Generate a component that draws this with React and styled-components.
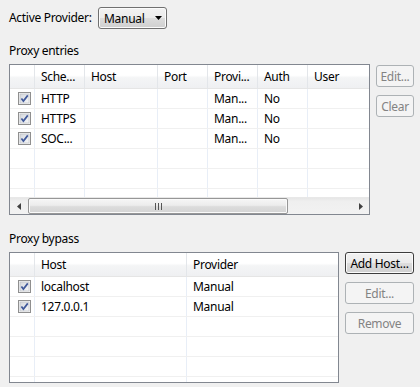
import React from 'react';
import styled, { createGlobalStyle } from 'styled-components';

const Global = createGlobalStyle`
  html, body { margin: 0; padding: 0; background: #f0f0f0; }
  body {
    font-family: "Noto Sans", "Liberation Sans", sans-serif;
    font-size: 12px;
    letter-spacing: -0.3px;
    color: #000;
  }
  * { box-sizing: border-box; }
`;

const Page = styled.div`
  width: 420px;
  height: 387px;
  padding: 7px 6px 0 9px;
  display: flex;
  flex-direction: column;
  overflow: hidden;
`;

const TopRow = styled.div`
  display: flex;
  align-items: center;
  height: 22px;
`;

const Label = styled.span`
  width: 89px;
  line-height: 16px;
`;

const Combo = styled.div`
  width: 69px;
  height: 22px;
  border: 1px solid #707070;
  border-radius: 3px;
  background: linear-gradient(#f2f2f2 0%, #ebebeb 50%, #dddddd 51%, #cfcfcf 100%);
  box-shadow: inset 0 0 0 1px #fbfbfb;
  display: flex;
  align-items: center;
  justify-content: space-between;
  padding: 0 4px 0 5px;
`;

const SectionTitle = styled.div`
  margin-top: ${p => p.$top}px;
  height: 16px;
  line-height: 16px;
  margin-bottom: 5px;
`;

const Section = styled.div`
  display: flex;
  gap: 6px;
  align-items: flex-start;
`;

const Table = styled.div`
  width: ${p => p.$w}px;
  height: ${p => p.$h}px;
  border: 1px solid #828790;
  background: #fff;
  display: flex;
  flex-direction: column;
  overflow: hidden;
`;

const HeaderRow = styled.div`
  display: flex;
  height: 24px;
  flex: none;
  border-bottom: 1px solid #e5e5e5;
  background: linear-gradient(#ffffff 0%, #ffffff 45%, #f4f5f6 55%, #eff0f2 100%);
`;

const HeadCell = styled.div`
  flex: ${p => (p.$w ? `0 0 ${p.$w}px` : '1 1 auto')};
  border-right: 1px solid #e3e6ea;
  padding-left: 6px;
  display: flex;
  align-items: center;
  white-space: nowrap;
  overflow: hidden;
  &:last-child { border-right: none; }
`;

const Body = styled.div`
  flex: 1 1 auto;
  overflow: hidden;
`;

const Row = styled.div`
  display: flex;
  height: 20px;
  border-bottom: 1px solid #f0f0f0;
`;

const Cell = styled.div`
  flex: ${p => (p.$w ? `0 0 ${p.$w}px` : '1 1 auto')};
  border-right: 1px solid #e8eef7;
  padding-left: ${p => (p.$check ? 8 : 6)}px;
  display: flex;
  align-items: center;
  white-space: nowrap;
  overflow: hidden;
  &:last-child { border-right: none; }
`;

const HScroll = styled.div`
  flex: 0 0 17px;
  display: flex;
  align-items: stretch;
  background: linear-gradient(#e6e6e6, #efefef 20%, #f2f2f2);
  border-top: 1px solid #e8e8e8;
`;

const ArrowBtn = styled.div`
  flex: 0 0 17px;
  display: flex;
  align-items: center;
  justify-content: center;
`;

const Track = styled.div`
  flex: 1 1 auto;
  display: flex;
  padding: 0 1px;
`;

const Thumb = styled.div`
  width: ${p => p.$w}px;
  border: 1px solid #979797;
  border-radius: 2px;
  background: linear-gradient(#f6f6f6 0%, #ececec 45%, #dcdcdc 55%, #d4d4d4 100%);
  box-shadow: inset 0 0 0 1px #fafafa;
  display: flex;
  align-items: center;
  justify-content: center;
`;

const Buttons = styled.div`
  width: ${p => p.$w}px;
  display: flex;
  flex-direction: column;
  gap: 8px;
  margin-top: ${p => p.$top}px;
`;

const Button = styled.div`
  height: 22px;
  border-radius: 3px;
  display: flex;
  align-items: center;
  justify-content: center;
  white-space: nowrap;
  border: 1px solid ${p => (p.$disabled ? '#adb2b5' : '#3c3c3c')};
  color: ${p => (p.$disabled ? '#838383' : '#000')};
  background: ${p =>
    p.$disabled
      ? '#f4f4f4'
      : 'linear-gradient(#f2f2f2 0%, #ebebeb 50%, #dddddd 51%, #cfcfcf 100%)'};
  box-shadow: ${p => (p.$disabled ? 'none' : 'inset 0 0 0 1px #fbfbfb')};
`;

const Check = () => (
  <svg width="13" height="13" viewBox="0 0 13 13">
    <defs>
      <linearGradient id="cbg" x1="0" y1="0" x2="1" y2="1">
        <stop offset="0" stopColor="#d4d7dc" />
        <stop offset="1" stopColor="#f6f7f8" />
      </linearGradient>
    </defs>
    <rect x="0.5" y="0.5" width="12" height="12" fill="#f4f4f4" stroke="#8f8f8f" />
    <rect x="2" y="2" width="9" height="9" fill="url(#cbg)" stroke="#b8bcc2" strokeWidth="0.6" />
    <path d="M3.4 6.4 L5.4 9 L9.8 3.4" fill="none" stroke="#41599a" strokeWidth="1.7" />
  </svg>
);

const DownArrow = () => (
  <svg width="7" height="4" viewBox="0 0 7 4">
    <path d="M0 0 H7 L3.5 4 Z" fill="#000" />
  </svg>
);

const LeftArrow = () => (
  <svg width="4" height="7" viewBox="0 0 4 7">
    <path d="M4 0 V7 L0 3.5 Z" fill="#404040" />
  </svg>
);

const RightArrow = () => (
  <svg width="4" height="7" viewBox="0 0 4 7">
    <path d="M0 0 V7 L4 3.5 Z" fill="#404040" />
  </svg>
);

const Grip = () => (
  <svg width="7" height="7" viewBox="0 0 7 7">
    <path d="M0.5 0 V7 M3.5 0 V7 M6.5 0 V7" stroke="#555" strokeWidth="1" />
  </svg>
);

const entryCols = [25, 50, 73, 50, 50, 50, 0];
const entryHead = ['', 'Sche...', 'Host', 'Port', 'Provi...', 'Auth', 'User'];
const entryRows = [
  ['HTTP', '', '', 'Man...', 'No', ''],
  ['HTTPS', '', '', 'Man...', 'No', ''],
  ['SOC...', '', '', 'Man...', 'No', ''],
];

const bypassCols = [25, 152, 0];
const bypassHead = ['', 'Host', 'Provider'];
const bypassRows = [
  ['localhost', 'Manual'],
  ['127.0.0.1', 'Manual'],
];

function Grid({ cols, head, rows, total }) {
  const empty = Array.from({ length: total - rows.length });
  return (
    <>
      <HeaderRow>
        {head.map((h, i) => (
          <HeadCell key={i} $w={cols[i]}>{h}</HeadCell>
        ))}
      </HeaderRow>
      <Body>
        {rows.map((r, ri) => (
          <Row key={ri}>
            <Cell $w={cols[0]} $check><Check /></Cell>
            {r.map((c, ci) => (
              <Cell key={ci} $w={cols[ci + 1]}>{c}</Cell>
            ))}
          </Row>
        ))}
        {empty.map((_, ri) => (
          <Row key={'e' + ri}>
            {cols.map((w, ci) => (
              <Cell key={ci} $w={w} />
            ))}
          </Row>
        ))}
      </Body>
    </>
  );
}

export default function App() {
  return (
    <>
      <Global />
      <Page>
        <TopRow>
          <Label>Active Provider:</Label>
          <Combo>
            <span>Manual</span>
            <DownArrow />
          </Combo>
        </TopRow>

        <SectionTitle $top={14}>Proxy entries</SectionTitle>
        <Section>
          <Table $w={361} $h={151}>
            <Grid cols={entryCols} head={entryHead} rows={entryRows} total={6} />
            <HScroll>
              <ArrowBtn><LeftArrow /></ArrowBtn>
              <Track>
                <Thumb $w={260}><Grip /></Thumb>
              </Track>
              <ArrowBtn><RightArrow /></ArrowBtn>
            </HScroll>
          </Table>
          <Buttons $w={38} $top={1}>
            <Button $disabled>Edit...</Button>
            <Button $disabled>Clear</Button>
          </Buttons>
        </Section>

        <SectionTitle $top={16}>Proxy bypass</SectionTitle>
        <Section>
          <Table $w={330} $h={131}>
            <Grid cols={bypassCols} head={bypassHead} rows={bypassRows} total={6} />
          </Table>
          <Buttons $w={69} $top={0}>
            <Button>Add Host...</Button>
            <Button $disabled>Edit...</Button>
            <Button $disabled>Remove</Button>
          </Buttons>
        </Section>
      </Page>
    </>
  );
}
